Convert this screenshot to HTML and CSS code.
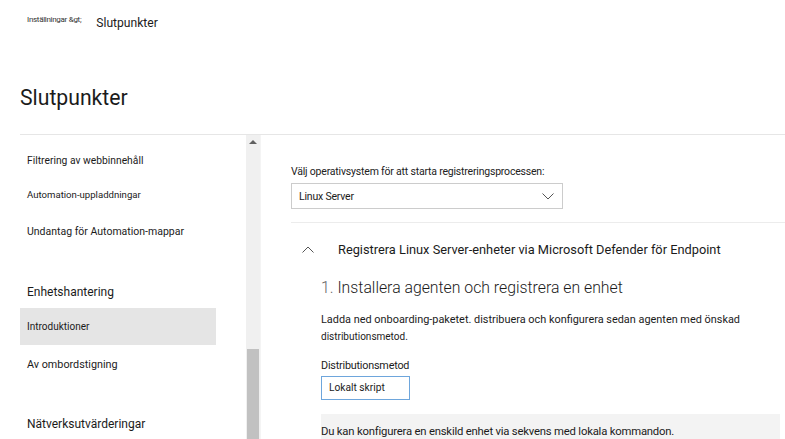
FILE: index.html
```html
<!DOCTYPE html>
<html lang="sv">
<head>
    <meta charset="UTF-8">
    <meta name="viewport" content="width=device-width, initial-scale=1.0">
    <title>Slutpunkter</title>
    <link rel="stylesheet" href="styles.css">
</head>
<body>
    <div class="crumbs">
        <span class="crumb-parent">Inställningar &amp;gt;</span>
        <span class="crumb-current">Slutpunkter</span>
    </div>

    <h1 class="page-title">Slutpunkter</h1>

    <div class="main">
        <nav class="sidebar">
            <div class="nav-list">
                <div class="nav-item">Filtrering av webbinnehåll</div>
                <div class="nav-item sm">Automation-uppladdningar</div>
                <div class="nav-item tall">Undantag för Automation-mappar</div>
                <div class="nav-group">Enhetshantering</div>
                <div class="nav-item active">Introduktioner</div>
                <div class="nav-item big">Av ombordstigning</div>
                <div class="nav-group">Nätverksutvärderingar</div>
            </div>
            <div class="scrollbar">
                <span class="scroll-up"></span>
                <span class="scroll-thumb"></span>
            </div>
        </nav>

        <section class="content">
            <label class="os-label">Välj operativsystem för att starta registreringsprocessen:</label>
            <div class="select">
                <span>Linux Server</span>
                <svg width="12" height="7" viewBox="0 0 12 7"><path d="M0.5 0.5 L6 6 L11.5 0.5" fill="none" stroke="#555" stroke-width="1"/></svg>
            </div>

            <div class="accordion">
                <div class="acc-head">
                    <svg class="acc-icon" width="12" height="7" viewBox="0 0 12 7"><path d="M0.5 6.5 L6 1 L11.5 6.5" fill="none" stroke="#555" stroke-width="1"/></svg>
                    <span>Registrera Linux Server-enheter via Microsoft Defender för Endpoint</span>
                </div>

                <div class="acc-body">
                    <h2 class="step-title"><span class="step-num">1.</span> Installera agenten och registrera en enhet</h2>
                    <p class="step-text">Ladda ned onboarding-paketet. distribuera och konfigurera sedan agenten med önskad <span class="small">distributionsmetod.</span></p>

                    <div class="field-label">Distributionsmetod</div>
                    <div class="method-box">Lokalt skript</div>

                    <div class="info-box">Du kan konfigurera en enskild enhet via sekvens med lokala kommandon.</div>
                </div>
            </div>
        </section>
    </div>
</body>
</html>
```

FILE: styles.css
```css
body {
    margin: 0;
    font-family: Roboto, "Liberation Sans", sans-serif;
    color: #1b1b1b;
    background: #fff;
    overflow: hidden;
    height: 439px;
}
.crumbs {
    display: flex;
    align-items: flex-start;
    padding: 13px 0 0 27px;
    height: 20px;
}
.crumb-parent {
    font-size: 8px;
    color: #333;
    letter-spacing: -0.3px;
    margin-top: 2px;
}
.crumb-current {
    font-size: 12.1px;
    margin-left: 15px;
    margin-top: 3px;
}
.page-title {
    font-weight: 400;
    font-size: 21.2px;
    line-height: 26px;
    margin: 52px 0 0 20px;
    height: 49px;
}
.main {
    display: flex;
    margin-left: 20px;
    border-top: 1px solid #e6e6e6;
    height: 305px;
}
.sidebar {
    display: flex;
    width: 240px;
    flex-shrink: 0;
    border-bottom: 1px solid #d0d0d0;
}
.nav-list {
    width: 226px;
    padding-top: 8px;
}
.nav-item {
    display: flex;
    align-items: center;
    height: 34px;
    width: 196px;
    padding-left: 7px;
    box-sizing: border-box;
    font-size: 10.3px;
}
.nav-item.sm {
    font-size: 9.6px;
}
.nav-item.tall {
    height: 40px;
    font-size: 10.5px;
}
.nav-item.big {
    height: 38px;
    font-size: 10.8px;
}
.nav-item.active {
    height: 37px;
    background: #e5e5e5;
    font-size: 10px;
}
.nav-group {
    display: flex;
    align-items: flex-end;
    height: 57px;
    padding: 0 0 9px 7px;
    box-sizing: border-box;
    font-size: 12px;
}
.scrollbar {
    position: relative;
    width: 14px;
    background: #f0f0f0;
}
.scroll-up {
    position: absolute;
    left: 3px;
    top: 5px;
    border-left: 4px solid transparent;
    border-right: 4px solid transparent;
    border-bottom: 4px solid #606060;
}
.scroll-thumb {
    position: absolute;
    left: 1px;
    right: 1px;
    top: 214px;
    bottom: 0;
    background: #c1c1c1;
}
.content {
    flex: 1;
    padding: 30px 0 0 30px;
    border-left: 1px solid #f4f4f4;
}
.os-label {
    display: block;
    font-size: 10.5px;
    letter-spacing: -0.2px;
    color: #222;
    margin-bottom: 5px;
}
.select {
    display: flex;
    align-items: center;
    justify-content: space-between;
    width: 272px;
    height: 26px;
    box-sizing: border-box;
    border: 1px solid #ccc;
    padding: 0 8px 0 7px;
    font-size: 10.5px;
    letter-spacing: -0.2px;
}
.accordion {
    margin-top: 13px;
    border-top: 1px solid #ececec;
}
.acc-head {
    display: flex;
    align-items: center;
    height: 52px;
    font-size: 12.8px;
}
.acc-icon {
    margin: 0 24px 0 11px;
}
.acc-body {
    padding-left: 30px;
}
.step-title {
    font-size: 15.8px;
    font-weight: 300;
    margin: 1px 0 0 0;
    line-height: 24px;
}
.step-num {
    color: #666;
}
.step-text {
    font-size: 10.9px;
    line-height: 17px;
    margin: 11px 0 0 0;
    width: 460px;
}
.step-text .small {
    font-size: 10px;
}
.field-label {
    font-size: 10.8px;
    letter-spacing: -0.2px;
    margin-top: 14px;
}
.method-box {
    width: 89px;
    height: 24px;
    box-sizing: border-box;
    border: 1px solid #6ea6dc;
    margin-top: 4px;
    padding: 5px 0 0 7px;
    font-size: 10.2px;
}
.info-box {
    margin-top: 14px;
    width: 459px;
    height: 30px;
    background: #f3f3f3;
    padding: 11px 0 0 0;
    box-sizing: border-box;
    font-size: 11.3px;
    letter-spacing: -0.2px;
}
```
